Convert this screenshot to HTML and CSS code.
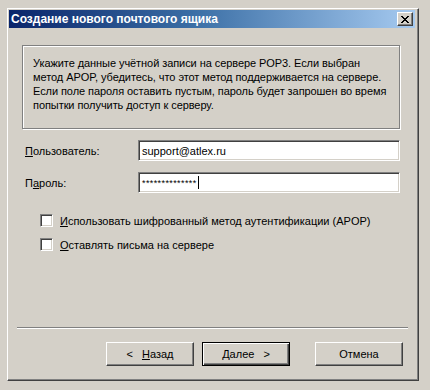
FILE: index.html
```html
<!DOCTYPE html>
<html lang="ru">
<head>
    <meta charset="UTF-8">
    <title>Создание нового почтового ящика</title>
    <link rel="stylesheet" href="styles.css">
</head>
<body>
    <div class="window">
        <div class="titlebar">
            <span class="title">Создание нового почтового ящика</span>
            <button class="close" title="Закрыть">
                <svg width="8" height="7" viewBox="0 0 8 7">
                    <path d="M0 0 L7 7 M1 0 L8 7 M7 0 L0 7 M8 0 L1 7" stroke="#000" stroke-width="1" fill="none"/>
                </svg>
            </button>
        </div>

        <div class="content">
            <div class="info">
                Укажите данные учётной записи на сервере POP3. Если выбран<br>
                метод APOP, убедитесь, что этот метод поддерживается на сервере.<br>
                Если поле пароля оставить пустым, пароль будет запрошен во время<br>
                попытки получить доступ к серверу.
            </div>

            <div class="row">
                <label class="label"><u>П</u>ользователь:</label>
                <div class="field">support@atlex.ru</div>
            </div>
            <div class="row">
                <label class="label">П<u>а</u>роль:</label>
                <div class="field password">**************<span class="caret"></span></div>
            </div>

            <div class="checks">
                <label class="check"><span class="box"></span><u>И</u>спользовать шифрованный метод аутентификации (APOP)</label>
                <label class="check"><span class="box"></span><u>О</u>ставлять письма на сервере</label>
            </div>
        </div>

        <div class="separator"></div>

        <div class="buttons">
            <button class="btn"><span class="arrow">&lt;</span><u>Н</u>азад</button>
            <button class="btn default"><u>Д</u>алее<span class="arrow right">&gt;</span></button>
            <button class="btn cancel">Отмена</button>
        </div>
    </div>
</body>
</html>
```

FILE: styles.css
```css
body {
    margin: 0;
    background-color: #d4d0c8;
    font-family: "Liberation Sans", Arial, sans-serif;
    font-size: 11px;
    color: #000;
}

.window {
    box-sizing: border-box;
    width: 412px;
    height: 373px;
    margin: 8px 0 0 7px;
    padding: 1px 3px 0 1px;
    border: 1px solid;
    border-color: #fff #404040 #404040 #fff;
    box-shadow: inset -1px -1px 0 #808080;
}

.titlebar {
    height: 18px;
    display: flex;
    align-items: center;
    justify-content: space-between;
    background: linear-gradient(to right, #0a246a 0%, #3a6ea5 45%, #a6caf0 100%);
}

.title {
    color: #fff;
    font-weight: bold;
    font-size: 12px;
    padding-left: 2px;
}

.close {
    box-sizing: border-box;
    width: 16px;
    height: 14px;
    margin-right: 2px;
    padding: 0;
    display: flex;
    align-items: center;
    justify-content: center;
    background: #d4d0c8;
    border: 1px solid;
    border-color: #fff #404040 #404040 #fff;
    box-shadow: inset -1px -1px 0 #808080;
}

.content {
    padding: 17px 0 0 13px;
}

.info {
    box-sizing: border-box;
    width: 378px;
    height: 84px;
    padding: 10px 0 0 10px;
    line-height: 14px;
    white-space: nowrap;
    letter-spacing: -0.07px;
    border: 1px solid #808080;
    box-shadow: inset 1px 1px 0 #fff, 1px 1px 0 #fff;
}

.row {
    display: flex;
    align-items: center;
    margin-top: 11px;
}

.row:first-of-type {
    margin-top: 17px;
}

.label {
    width: 113px;
    padding-left: 3px;
}

.field {
    box-sizing: border-box;
    width: 262px;
    height: 21px;
    padding: 3px 3px;
    line-height: 14px;
    background: #fff;
    border: 1px solid;
    border-color: #808080 #fff #fff #808080;
    box-shadow: inset 1px 1px 0 #404040, inset -1px -1px 0 #d4d0c8;
    display: flex;
    align-items: center;
}

.password {
    font-size: 9px;
    letter-spacing: 0.4px;
}

.caret {
    display: inline-block;
    width: 1px;
    height: 13px;
    background: #000;
    margin-left: 1px;
}

.checks {
    display: flex;
    flex-direction: column;
    gap: 11px;
    margin-top: 21px;
    padding-left: 18px;
}

.check {
    display: flex;
    align-items: center;
    height: 13px;
}

.box {
    box-sizing: border-box;
    width: 13px;
    height: 13px;
    margin-right: 7px;
    background: #fff;
    border: 1px solid;
    border-color: #808080 #fff #fff #808080;
    box-shadow: inset 1px 1px 0 #404040, inset -1px -1px 0 #d4d0c8;
}

.separator {
    margin: 76px 0 0 8px;
    width: 391px;
    height: 1px;
    background: #808080;
    border-bottom: 1px solid #fff;
}

.buttons {
    display: flex;
    margin: 13px 0 0 97px;
}

.btn {
    box-sizing: border-box;
    width: 88px;
    height: 24px;
    padding: 0;
    font-family: "Liberation Sans", Arial, sans-serif;
    font-size: 11px;
    color: #000;
    background: #d4d0c8;
    border: 1px solid;
    border-color: #fff #404040 #404040 #fff;
    box-shadow: inset -1px -1px 0 #808080;
}

.btn.default {
    margin-left: 8px;
    border-color: #000;
    box-shadow: inset 1px 1px 0 #fff, inset -1px -1px 0 #404040, inset -2px -2px 0 #808080;
}

.btn.cancel {
    margin-left: 25px;
}

.arrow {
    margin-right: 9px;
}

.arrow.right {
    margin: 0 0 0 9px;
}
```
